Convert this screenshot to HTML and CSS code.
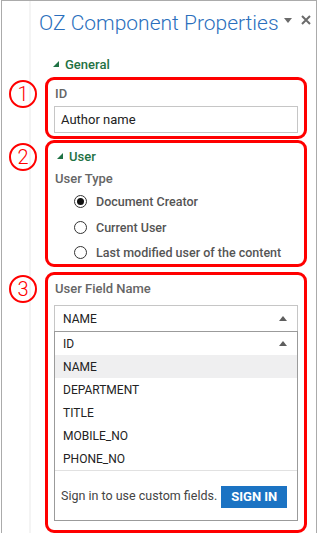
FILE: index.html
```html
<!DOCTYPE html>
<html lang="en">
<head>
  <meta charset="UTF-8">
  <title>OZ Component Properties</title>
  <link rel="stylesheet" href="styles.css">
</head>
<body>
  <div class="pane">
    <header class="pane-head">
      <h1 class="pane-title">OZ Component Properties</h1>
      <span class="head-menu">
        <svg width="8" height="5" viewBox="0 0 8 5"><path d="M0 0H8L4 5Z" fill="#6b6b6b"/></svg>
      </span>
      <span class="head-close">
        <svg width="10" height="10" viewBox="0 0 10 10"><path d="M1 1L9 9M9 1L1 9" stroke="#6b6b6b" stroke-width="2"/></svg>
      </span>
    </header>

    <div class="pane-body">
      <div class="group-title general"><span class="caret"></span>General</div>

      <div class="note-row">
        <span class="note-num">1</span>
        <section class="note-box box-id">
          <div class="field-label">ID</div>
          <div class="text-input">Author name</div>
        </section>
      </div>

      <div class="note-row">
        <span class="note-num">2</span>
        <section class="note-box box-user">
          <div class="group-title"><span class="caret"></span>User</div>
          <div class="field-label">User Type</div>
          <div class="radio-list">
            <label class="radio"><input type="radio" name="userType" checked>Document Creator</label>
            <label class="radio"><input type="radio" name="userType">Current User</label>
            <label class="radio"><input type="radio" name="userType">Last modified user of the content</label>
          </div>
        </section>
      </div>

      <div class="note-row row-last">
        <span class="note-num">3</span>
        <section class="note-box box-field">
          <div class="field-label">User Field Name</div>
          <div class="combo">
            <div class="combo-value">NAME<span class="up-arrow"></span></div>
            <div class="combo-list">
              <div class="combo-item">ID<span class="up-arrow"></span></div>
              <div class="combo-item selected">NAME</div>
              <div class="combo-item">DEPARTMENT</div>
              <div class="combo-item">TITLE</div>
              <div class="combo-item">MOBILE_NO</div>
              <div class="combo-item">PHONE_NO</div>
              <div class="combo-foot">
                <span>Sign in to use custom fields.</span>
                <button class="sign-in">SIGN IN</button>
              </div>
            </div>
          </div>
        </section>
      </div>
    </div>
  </div>
</body>
</html>
```

FILE: styles.css
```css
* {
  box-sizing: border-box;
}
body {
  margin: 0;
  background: #fff;
  font-family: Roboto, 'Liberation Sans', sans-serif;
  font-size: 12px;
  color: #333;
}
.pane {
  margin-left: 1px;
  width: 316px;
  height: 533px;
  border: 1px solid #ababab;
  border-bottom: none;
  background: linear-gradient(to right, #fff 27px, #f4f4f4 27px, #f4f4f4 29px, #fff 29px);
}
.pane-head {
  display: flex;
  align-items: center;
  height: 44px;
  padding-left: 37px;
}
.pane-title {
  margin: 0;
  font-size: 21px;
  font-weight: 300;
  color: #2b6fbd;
  white-space: nowrap;
}
.head-menu {
  display: flex;
  margin-left: 5px;
  margin-top: -6px;
}
.head-close {
  display: flex;
  margin-left: 9px;
  margin-top: -6px;
}
.group-title {
  display: flex;
  align-items: center;
  font-size: 13px;
  font-weight: 500;
  color: #1f7244;
  height: 20px;
}
.general {
  padding-left: 51px;
  margin-top: 9px;
  margin-bottom: 3px;
}
.caret {
  width: 0;
  height: 0;
  border-left: 6px solid transparent;
  border-bottom: 6px solid #1f7244;
  margin-right: 6px;
}
.note-row {
  display: flex;
  align-items: flex-start;
  padding-left: 7px;
  margin-bottom: 1px;
}
.row-last {
  margin-top: 5px;
}
.note-num {
  flex: none;
  width: 28px;
  height: 28px;
  margin-top: 3px;
  margin-right: 8px;
  border: 2px solid #f00;
  border-radius: 50%;
  display: flex;
  align-items: center;
  justify-content: center;
  color: #f00;
  font-size: 20px;
  font-weight: 300;
}
.note-box {
  width: 262px;
  border: 3px solid #f00;
  border-radius: 9px;
  padding: 4px 6px;
}
.field-label {
  padding-left: 1px;
  font-size: 13px;
  font-weight: 500;
  color: #666;
  line-height: 20px;
}
.box-id {
  height: 62px;
}
.box-id .field-label {
  margin-bottom: 2px;
}
.text-input {
  height: 27px;
  border: 1px solid #c6c6c6;
  padding-left: 6px;
  line-height: 25px;
  font-size: 13px;
  color: #222;
  background: #fff;
}
.box-user {
  height: 127px;
  padding-top: 3px;
}
.box-user .group-title {
  padding-left: 3px;
  margin-bottom: 3px;
}
.radio-list {
  padding-left: 20px;
}
.radio {
  display: flex;
  align-items: center;
  height: 25.5px;
  font-size: 12.5px;
  font-weight: 500;
  color: #555;
  white-space: nowrap;
}
.radio input {
  appearance: none;
  width: 13px;
  height: 13px;
  margin: 0 9px 0 0;
  border: 1px solid #333;
  border-radius: 50%;
  background: #fff;
  display: grid;
  place-content: center;
}
.radio input:checked::before {
  content: "";
  width: 7px;
  height: 7px;
  border-radius: 50%;
  background: #111;
}
.box-field {
  height: 261px;
}
.box-field .field-label {
  margin-bottom: 6px;
}
.combo {
  font-size: 12px;
  color: #222;
}
.combo-value,
.combo-item {
  display: flex;
  align-items: center;
  justify-content: space-between;
  padding: 0 10px 0 8px;
}
.combo-value {
  height: 26px;
  border: 1px solid #c6c6c6;
  border-bottom: none;
  background: #fff;
}
.combo-list {
  border: 1px solid #9b9b9b;
  background: #fff;
}
.combo-item {
  height: 23px;
}
.combo-item.selected {
  background: #efeff0;
}
.up-arrow {
  width: 0;
  height: 0;
  border-left: 4px solid transparent;
  border-right: 4px solid transparent;
  border-bottom: 5px solid #5e5e5e;
}
.combo-foot {
  display: flex;
  align-items: center;
  border-top: 1px solid #e1e1e1;
  height: 50px;
  padding: 0 0 0 6px;
  font-size: 12.5px;
  color: #444;
  white-space: nowrap;
}
.sign-in {
  border: none;
  background: #1b73c3;
  color: #fff;
  font-family: inherit;
  font-size: 13px;
  font-weight: 700;
  margin-left: 4px;
  padding: 0 10px;
  height: 22px;
  margin-top: 2px;
}
```
